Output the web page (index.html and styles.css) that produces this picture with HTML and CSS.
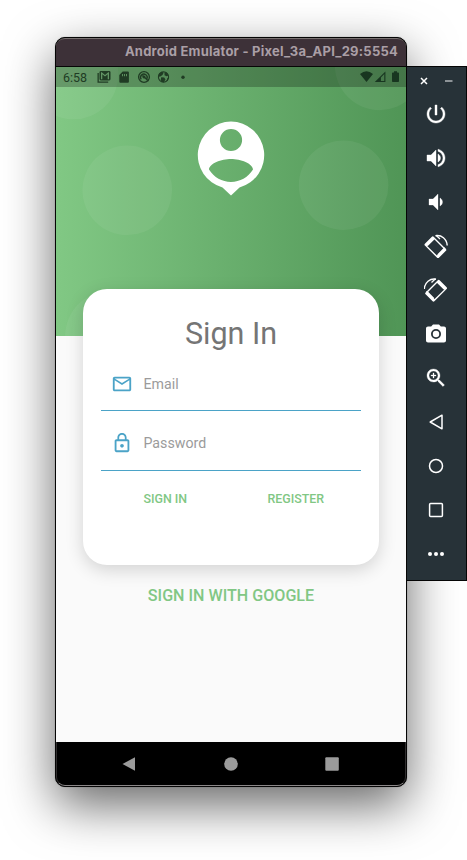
FILE: index.html
```
<!DOCTYPE html>
<html lang="en">
<head>
<meta charset="utf-8">
<title>Sign In</title>
<link rel="stylesheet" href="styles.css">
</head>
<body>
<main class="desktop">
  <section class="phone">
    <header class="titlebar">Android Emulator - Pixel_3a_API_29:5554</header>
    <div class="screen">
      <div class="hero">
        <svg class="bubbles" width="350" height="269" viewBox="56 67 350 269" fill="#fff" fill-opacity=".06">
          <circle cx="73.5" cy="74.5" r="44.8"/><circle cx="127.3" cy="190.3" r="44.8"/>
          <circle cx="343.6" cy="185.2" r="44.8"/><circle cx="379.6" cy="65.4" r="44.8"/>
          <circle cx="110" cy="336" r="44.8"/>
        </svg>
        <div class="statusbar">
          <span class="clock">6:58</span>
          <svg class="notifications" width="92" height="14" viewBox="0 0 92 14" fill="#203c24">
            <path d="M.5 3v9.7h10.7v-1.3H1.8V3z"/>
            <path fill-rule="evenodd" d="M3.8 1h8.4q1.3 0 1.3 1.3v6.8q0 1.3-1.3 1.3H3.8q-1.3 0-1.3-1.3V2.300q0-1.300 1.300-1.300zM4 2.200v7h1.300V4.300L8 6.400l2.700-2.100v4.900H12v-7h-.7L8 4.900 4.700 2.200z"/>
            <path fill-rule="evenodd" d="M25.700 1.400h5.200q1 0 1 1v9.400q0 1-1 1h-7.600q-1 0-1-1V5zM25 4v2.300h1V4zm2 0v2.300h1V4zm2 0v2.300h1V4z"/>
            <g fill="none" stroke="#203c24"><circle cx="47" cy="7" r="5.400" stroke-width="1.300"/><path d="M44.200 9.300a3.300 3.300 0 1 1 5.500-.3M45.500 5.500l6 5.500" stroke-width="1.400"/><circle cx="47" cy="7" r="1.100" fill="#203c24"/></g>
            <circle cx="66.500" cy="7" r="5.100" fill="none" stroke="#203c24" stroke-width="1.100"/>
            <path d="M62 3.500l3-2 1.500 1.500-1 2-2.200 1.500-2 .3zM67.500 3l2-.8 2 3.200-2 .8-2-1zM64.200 7.300l3 .2 1.300 2-1.800 2.800-2.200-.6-.8-2zM70.500 8l1.200-.3-1 3-1.400.8z"/>
            <circle cx="86" cy="7.200" r="1.700"/>
          </svg>
          <svg class="signals" width="40" height="14" viewBox="0 0 40 14" fill="#183620">
            <path d="M0 4Q6.500-1.300 13 4L6.500 12z"/>
            <path fill-rule="evenodd" d="M25.400 1.400V12H14.800zM24.300 4L20.900 7.400V11h3.400z"/>
            <path d="M34 1.200h3v1.300h1.200q.8 0 .8.800v8q0 .8-.8.800h-5.400q-.8 0-.8-.8v-8q0-.8.800-.8H34z"/>
          </svg>
        </div>
        <svg class="avatar" width="68" height="75" viewBox="197 121 68 75">
          <path fill="#fff" fill-rule="evenodd" d="M231 121.500a33.600 33.600 0 0 1 8.500 66L231 195.500 222.500 187.500a33.600 33.600 0 0 1 8.500-66zM231 128.900a11.100 11.100 0 1 0 0 22.200 11.100 11.100 0 1 0 0-22.200zM231 158.900C221.500 158.900 209 163.500 209 169.500 214 177.500 222 181.900 231 181.900S248 177.500 253 169.500C253 163.500 240.500 158.900 231 158.900z"/>
        </svg>
      </div>
      <form class="card">
        <h1 class="heading">Sign In</h1>
        <label class="field">
          <svg width="22" height="22" viewBox="0 0 24 24"><path d="M22 6c0-1.100-.9-2-2-2H4c-1.100 0-2 .9-2 2v12c0 1.100.9 2 2 2h16c1.100 0 2-.9 2-2V6zm-2 0l-8 5-8-5h16zm0 12H4V8l8 5 8-5v10z"/></svg>
          <span>Email</span>
        </label>
        <label class="field field-password">
          <svg width="22" height="22" viewBox="0 0 24 24"><path d="M12 17c1.100 0 2-.9 2-2s-.9-2-2-2-2 .9-2 2 .9 2 2 2zm6-9h-1V6c0-2.760-2.240-5-5-5S7 3.240 7 6v2H6c-1.100 0-2 .9-2 2v10c0 1.100.9 2 2 2h12c1.100 0 2-.9 2-2V10c0-1.100-.9-2-2-2zM8.900 6c0-1.710 1.390-3.100 3.100-3.100s3.100 1.390 3.100 3.100v2H8.900V6zM18 20H6V10h12v10z"/></svg>
          <span>Password</span>
        </label>
        <div class="actions"><span>SIGN IN</span><span>REGISTER</span></div>
      </form>
      <div class="google">SIGN IN WITH GOOGLE</div>
    </div>
    <nav class="navbar">
      <svg width="16" height="16" viewBox="0 0 16 16"><path d="M14 1.300v13.400L1.500 8z"/></svg>
      <svg width="16" height="16" viewBox="0 0 16 16"><circle cx="8" cy="8" r="6.800"/></svg>
      <svg width="16" height="16" viewBox="0 0 16 16"><rect x="1.300" y="1.200" width="13.500" height="13.500" rx="1"/></svg>
    </nav>
  </section>
  <aside class="toolbar">
    <div class="controls">
      <svg width="8" height="8" viewBox="0 0 8 8"><path d="M1 1l6 6M7 1L1 7" stroke="#fff" stroke-width="1.500"/></svg>
      <svg width="8" height="8" viewBox="0 0 8 8"><path d="M0 4h7.500" stroke="#a0a6a9" stroke-width="1.700"/></svg>
    </div>
    <svg class="tool" viewBox="0 0 24 24"><path d="M13 3h-2v10h2V3zm4.830 2.170l-1.420 1.420C17.990 7.860 19 9.810 19 12c0 3.870-3.130 7-7 7s-7-3.130-7-7c0-2.190 1.010-4.140 2.580-5.420L6.170 5.170C4.230 6.820 3 9.260 3 12c0 4.970 4.030 9 9 9s9-4.030 9-9c0-2.740-1.230-5.180-3.170-6.830z" stroke="#fff" stroke-width=".4"/></svg>
    <svg class="tool" viewBox="0 0 24 24"><path d="M3 9v6h4l5 5V4L7 9H3zm13.500 3c0-1.770-1.020-3.290-2.500-4.030v8.050c1.480-.73 2.500-2.250 2.500-4.020zM14 3.230v2.060c2.890.86 5 3.540 5 6.710s-2.110 5.850-5 6.710v2.060c4.010-.91 7-4.490 7-8.770s-2.990-7.860-7-8.770z" stroke="#fff" stroke-width=".4"/></svg>
    <svg class="tool" viewBox="0 0 24 24"><path d="M18.500 12c0-1.770-1.020-3.290-2.500-4.030v8.050c1.480-.73 2.500-2.250 2.500-4.020zM5 9v6h4l5 5V4L9 9H5z" stroke="#fff" stroke-width=".3"/></svg>
    <svg class="tool" viewBox="0 0 24 24"><g id="rotate"><path transform="translate(-.3 .8)" fill-rule="evenodd" d="M8.200 2L1.200 9q-.9.900 0 1.800L13.400 23q.9.900 1.800 0l7-7q.9-.9 0-1.800L10 2q-.9-.9-1.800 0zM10.300 4.300L20 14 13.200 20.800 3.500 11.100z"/><path d="M11.500 1.700C17.500.7 22.800 4.900 23.200 11.500" fill="none" stroke="#fff" stroke-width="1.400"/><path d="M12 1.300l4 3.700" stroke="#fff" stroke-width="1.300"/><path d="M2.500 10.700L9.600 3.600l1.300 1.300-7.100 7.100zM13.300 20.400l7.100-7.100 1.200 1.200-7.100 7.100z"/></g></svg>
    <svg class="tool" viewBox="0 0 24 24"><use href="#rotate" transform="translate(23.500 -.5) scale(-1 1)"/></svg>
    <svg class="tool" viewBox="0 0 24 24"><circle cx="12" cy="12" r="3.200"/><path d="M9 2.500L7.170 4.500H4c-1.100 0-2 .9-2 2v12c0 1.100.9 2 2 2h16c1.100 0 2-.9 2-2v-12c0-1.100-.9-2-2-2h-3.170L15 2.500H9zm3 14.500a5 5 0 1 1 0-10 5 5 0 0 1 0 10z"/></svg>
    <svg class="tool" viewBox="0 0 24 24"><path d="M15.500 14h-.79l-.28-.27C15.410 12.590 16 11.110 16 9.500 16 5.910 13.090 3 9.500 3S3 5.910 3 9.500 5.910 16 9.500 16c1.610 0 3.090-.59 4.230-1.570l.27.28v.79l5 4.990L20.490 19l-4.990-5zm-6 0C7.010 14 5 11.990 5 9.500S7.010 5 9.500 5 14 7.010 14 9.500 11.990 14 9.500 14zm2.500-4h-2v2H9v-2H7V9h2V7h1v2h2v1z" stroke="#fff" stroke-width=".3"/></svg>
    <svg class="tool line" viewBox="0 0 24 24"><path d="M18 5.200v13.600L6.200 12z"/></svg>
    <svg class="tool line" viewBox="0 0 24 24"><circle cx="12" cy="12" r="6.500"/></svg>
    <svg class="tool line" viewBox="0 0 24 24"><rect x="5.600" y="5.600" width="12.800" height="12.800" rx="1"/></svg>
    <svg class="tool" viewBox="0 0 24 24"><circle cx="6" cy="12" r="2"/><circle cx="12" cy="12" r="2"/><circle cx="18" cy="12" r="2"/></svg>
  </aside>
</main>
</body>
</html>
```
FILE: styles.css
```
* { box-sizing: border-box; }
html { overflow: hidden; background: #fff; }
body { margin: 0; font-family: Roboto, sans-serif; }
svg { display: block; flex: none; }

.desktop {
  display: flex;
  align-items: flex-start;
  width: 467px;
  height: 860px;
  padding: 37px 0 0 55px;
  overflow: hidden;
}
.phone {
  display: flex;
  flex-direction: column;
  width: 352px;
  height: 750px;
  border: 1px solid #050505;
  border-radius: 10px;
  background: #000;
  box-shadow: 0 18px 50px rgba(0, 0, 0, .6), 0 0 1px rgba(0, 0, 0, .5);
}
.titlebar {
  height: 29px;
  padding-right: 8px;
  border-top: 1px solid #77706f;
  border-bottom: 1px solid #060606;
  border-radius: 9px 9px 0 0;
  background: #3d3138;
  color: #aa9fa6;
  font: 700 13px/25px Inter, sans-serif;
  letter-spacing: .23px;
  text-align: right;
  white-space: nowrap;
}
.screen {
  display: flex;
  flex-direction: column;
  align-items: center;
  height: 675px;
  background: #fafafa;
}
.hero {
  display: grid;
  grid-template-rows: 20px 249px;
  justify-items: center;
  width: 350px;
  height: 269px;
  background: linear-gradient(90deg, #81c884, #509556);
}
.bubbles { grid-area: 1 / 1 / 3 / 2; }
.statusbar {
  grid-area: 1 / 1;
  display: flex;
  align-items: center;
  width: 350px;
  padding: 0 6px 0 7px;
  background: rgba(0, 0, 0, .24);
  color: #203c24;
}
.clock { width: 33.500px; font-size: 12.500px; }
.signals { margin-left: auto; }
.avatar { grid-area: 2 / 1; margin-top: 34px; }
.card {
  width: 296px;
  height: 276px;
  margin-top: -47px;
  padding: 26px 18px 0;
  border-radius: 24px;
  background: #fff;
  box-shadow: 0 5px 18px rgba(0, 0, 0, .16);
}
.heading {
  margin: 0;
  height: 38px;
  color: #757575;
  font-size: 30.500px;
  font-weight: 400;
  line-height: 38px;
  text-align: center;
}
.field {
  display: flex;
  align-items: center;
  gap: 10.500px;
  height: 58px;
  padding: 4px 10px 0;
  border-bottom: 1px solid #4ba3c7;
  color: #9b9b9b;
  font-size: 14.200px;
  fill: #4ba3c7;
}
.field-password { height: 60px; padding-top: 5px; }
.actions {
  display: flex;
  justify-content: space-between;
  padding: 20px 37px 0 42.500px;
  color: #81c784;
  font-size: 12.400px;
  font-weight: 500;
  line-height: 16px;
}
.google {
  margin-top: 21px;
  color: #81c784;
  font-size: 16.100px;
  font-weight: 500;
  line-height: 20px;
}
.navbar {
  display: flex;
  align-items: center;
  justify-content: space-between;
  height: 44px;
  padding: 0 65px 0 64px;
  border: solid #302e2f;
  border-width: 0 1px;
  border-bottom: 1px solid #8b8788;
  border-radius: 0 0 9px 9px;
  fill: #9b9b9b;
}
.toolbar {
  display: flex;
  flex-direction: column;
  align-items: center;
  width: 60px;
  height: 515px;
  margin-top: 29px;
  padding-right: 1px;
  border: solid #050505;
  border-width: 1px 1px 1px 0;
  background: #273238;
  fill: #fff;
}
.controls {
  display: flex;
  flex: none;
  justify-content: space-between;
  width: 34px;
  height: 35px;
  padding-top: 10px;
}
.tool { width: 24px; height: 24px; margin-bottom: 20px; }
.controls { width: 33px; }
.line { fill: none; stroke: #fff; stroke-width: 1.500; stroke-linejoin: round; }
```
